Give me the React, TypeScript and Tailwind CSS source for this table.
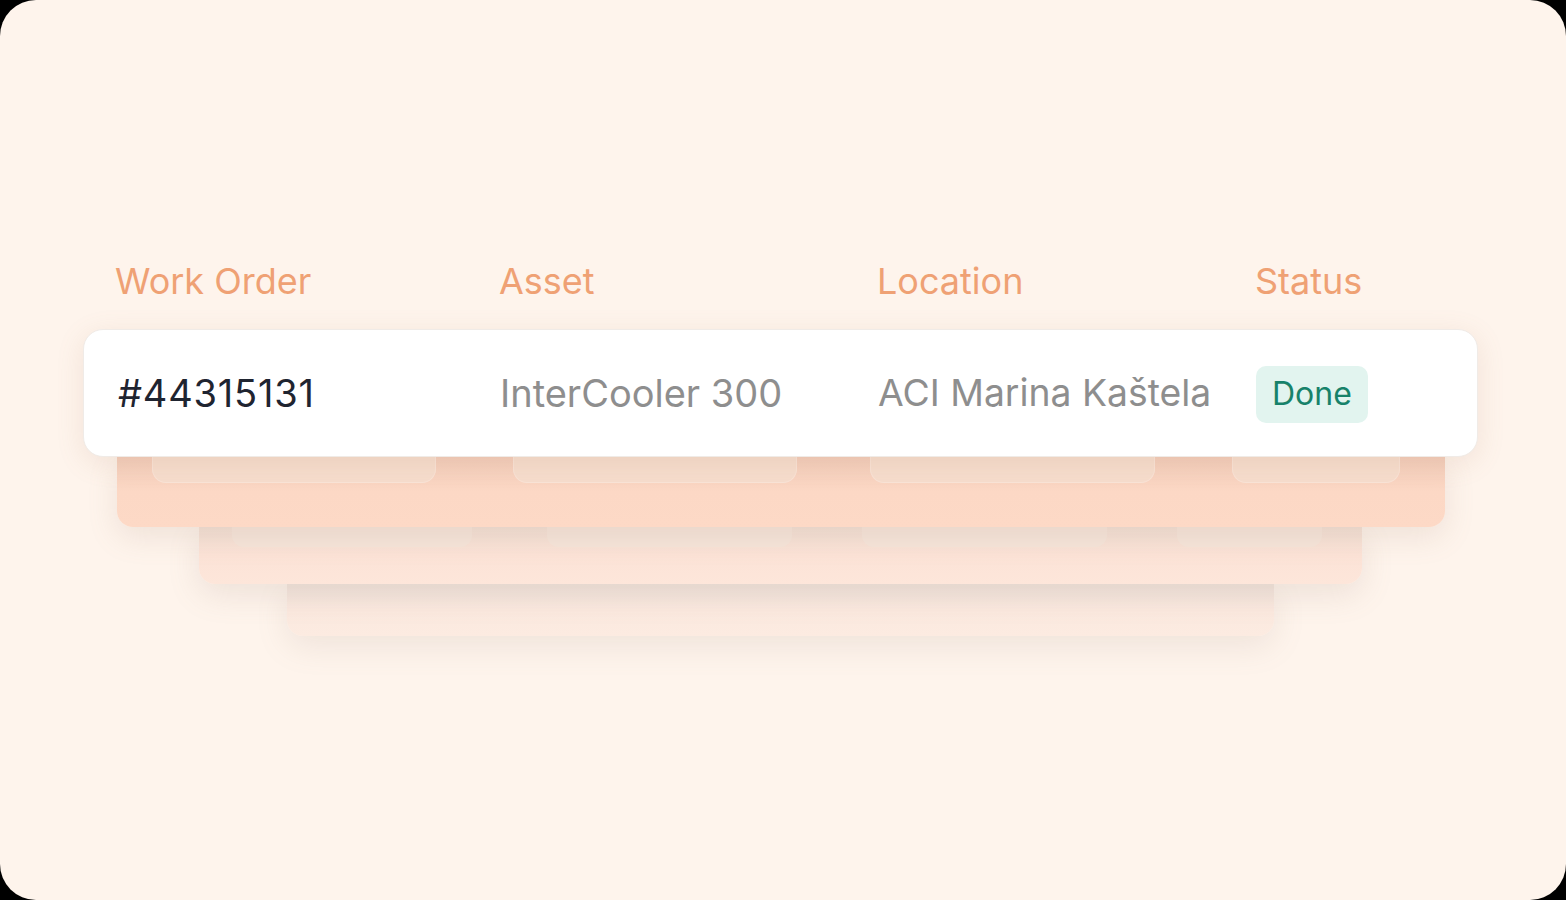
const font = { fontFamily: 'Inter, "Noto Sans", sans-serif' };

const columns = ["Work Order", "Asset", "Location", "Status"];

function GhostPills({ cells, className }: { cells: { left: number; width: number }[]; className: string }) {
  return (
    <div className="flex">
      {cells.map((c, i) => (
        <div
          key={i}
          className={className}
          style={{ marginLeft: c.left, width: c.width }}
        />
      ))}
    </div>
  );
}

export default function App() {
  return (
    <div className="w-[1566px] h-[900px] bg-black">
      <div
        className="w-full h-full rounded-[36px] bg-[#fef4ec] overflow-hidden pt-[259px]"
        style={font}
      >
        <div className="ml-[83px] w-[1395px]">
          {/* header */}
          <div className="grid grid-cols-[384px_378px_378px_1fr] pl-[32px] h-[44px] items-center text-[36px] leading-[44px] text-[#efa174]">
            {columns.map((c) => (
              <div key={c}>{c}</div>
            ))}
          </div>

          {/* stack */}
          <div className="mt-[26px] flex flex-col items-center">
            <div className="relative z-30 w-full h-[128px] rounded-[20px] bg-white border border-[#f0ebe7] shadow-[0_6px_28px_rgba(170,120,90,0.14)] grid grid-cols-[384px_378px_378px_1fr] pl-[32px] items-center text-[38px]">
              <div className="pl-[2px] text-[#1f2430] tracking-[0.8px]">#44315131</div>
              <div className="text-[#8e8e8e]">InterCooler 300</div>
              <div className="text-[#8e8e8e] text-[37.3px]">ACI Marina Kaštela</div>
              <div>
                <span className="inline-flex items-center h-[57px] px-[16px] rounded-[10px] bg-[#e2f4ef] text-[#17826a] text-[32px]">
                  Done
                </span>
              </div>
            </div>

            <div className="relative z-20 w-[1328px] h-[70px] rounded-b-[16px] bg-gradient-to-b from-[#f2cdba] via-[#fcd8c5] to-[#fdd9c6] shadow-[0_10px_30px_rgba(160,130,110,0.16)]">
              <GhostPills
                className="h-[26px] rounded-b-[14px] bg-[#f6ddcd] border-b border-x border-[#f9e3d6]"
                cells={[
                  { left: 35, width: 284 },
                  { left: 77, width: 284 },
                  { left: 73, width: 285 },
                  { left: 77, width: 168 },
                ]}
              />
            </div>

            <div className="relative z-10 w-[1163px] h-[57px] rounded-b-[16px] bg-gradient-to-b from-[#f2e0d5] via-[#fce3d7] to-[#fde6da] shadow-[0_10px_32px_rgba(150,125,110,0.16)]">
              <GhostPills
                className="h-[20px] rounded-b-[12px] bg-[#f6e5da]"
                cells={[
                  { left: 33, width: 240 },
                  { left: 75, width: 245 },
                  { left: 70, width: 245 },
                  { left: 70, width: 145 },
                ]}
              />
            </div>

            <div className="relative z-0 w-[987px] h-[52px] rounded-b-[16px] bg-gradient-to-b from-[#f1e4dc] via-[#fbe9df] to-[#fcebe1] shadow-[0_10px_32px_rgba(150,125,110,0.14)]" />
          </div>
        </div>
      </div>
    </div>
  );
}
